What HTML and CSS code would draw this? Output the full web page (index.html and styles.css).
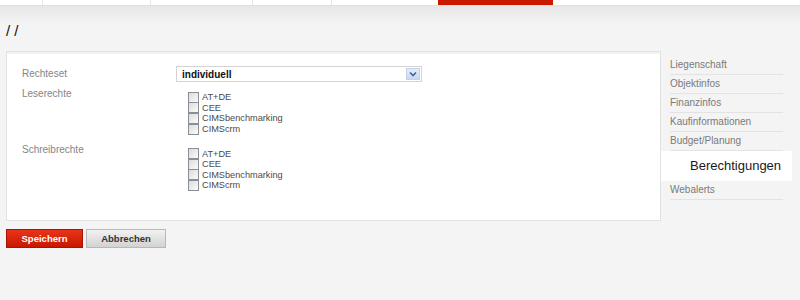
FILE: index.html
```html
<!DOCTYPE html>
<html lang="de">
<head>
    <meta charset="UTF-8">
    <meta name="viewport" content="width=device-width, initial-scale=1.0">
    <title>Berechtigungen</title>
    <link rel="stylesheet" href="styles.css">
</head>
<body>

    <!-- Top navigation (scrolled so only the bottom edge shows) -->
    <div class="topnav">
        <span class="tab tab-first"></span>
        <span class="tab tab-w108"></span>
        <span class="tab tab-w102"></span>
        <span class="tab tab-w79"></span>
        <span class="tab tab-w107"></span>
        <span class="tab tab-active"></span>
        <span class="tab tab-rest"></span>
    </div>

    <div class="page">
        <h1 class="crumbs">/ /</h1>

        <div class="content">
            <div class="panel">
                <div class="form-row">
                    <label class="form-label form-label-mid">Rechteset</label>
                    <div class="select-wrap">
                        <select class="select">
                            <option>individuell</option>
                        </select>
                        <span class="select-arrow">
                            <svg width="8" height="6" viewBox="0 0 8 6">
                                <path d="M1 1.5 L4 4.5 L7 1.5" fill="none" stroke="#3f66a8" stroke-width="1.6"/>
                            </svg>
                        </span>
                    </div>
                </div>

                <div class="form-row row-read">
                    <label class="form-label">Leserechte</label>
                    <div class="check-list">
                        <label class="check"><input type="checkbox"> AT+DE</label>
                        <label class="check"><input type="checkbox"> CEE</label>
                        <label class="check"><input type="checkbox"> CIMSbenchmarking</label>
                        <label class="check"><input type="checkbox"> CIMScrm</label>
                    </div>
                </div>

                <div class="form-row row-write">
                    <label class="form-label">Schreibrechte</label>
                    <div class="check-list">
                        <label class="check"><input type="checkbox"> AT+DE</label>
                        <label class="check"><input type="checkbox"> CEE</label>
                        <label class="check"><input type="checkbox"> CIMSbenchmarking</label>
                        <label class="check"><input type="checkbox"> CIMScrm</label>
                    </div>
                </div>
            </div>

            <ul class="sidenav">
                <li><a href="#">Liegenschaft</a></li>
                <li><a href="#">Objektinfos</a></li>
                <li><a href="#">Finanzinfos</a></li>
                <li><a href="#">Kaufinformationen</a></li>
                <li><a href="#">Budget/Planung</a></li>
                <li class="active"><a href="#">Berechtigungen</a></li>
                <li><a href="#">Webalerts</a></li>
            </ul>
        </div>

        <div class="buttons">
            <button class="btn btn-save">Speichern</button>
            <button class="btn btn-cancel">Abbrechen</button>
        </div>
    </div>

</body>
</html>
```

FILE: styles.css
```css
/* General Page Styling */
body {
    font-family: 'Liberation Sans', Arial, sans-serif;
    background-color: #f4f4f4;
    margin: 0;
    color: #333;
}

/* Top Navigation */
.topnav {
    display: flex;
    height: 5px;
    background-color: #fff;
    border-bottom: 1px solid #e0e0e0;
}

.tab {
    border-left: 1px solid #e6e6e6;
}

.tab-first {
    width: 42px;
    border-left: none;
}

.tab-w108 { width: 107px; }
.tab-w102 { width: 101px; }
.tab-w79 { width: 78px; }
.tab-w107 { width: 106px; }

.tab-active {
    width: 115px;
    border-left: none;
    background-color: #c91a00;
}

.tab-rest {
    flex: 1;
    border-left: none;
}

/* Page */
.page {
    background: linear-gradient(#e6e6e6, #f4f4f4 18px);
    padding: 16px 8px 0 6px;
}

.crumbs {
    margin: 0 0 11px 0;
    font-size: 15px;
    line-height: 18px;
    font-weight: normal;
    color: #111;
}

.content {
    display: flex;
    align-items: flex-start;
}

/* Form Panel */
.panel {
    width: 623px;
    background-color: #fff;
    border: 1px solid #e2e2e2;
    box-shadow: inset 0 2px 0 #f2f2f2;
    padding: 14px 15px 29px 15px;
}

.form-row {
    display: flex;
    align-items: flex-start;
}

.row-read {
    margin-top: 6px;
}

.row-write {
    margin-top: 10px;
}

.form-label {
    width: 154px;
    font-size: 10px;
    line-height: 12px;
    color: #858585;
}

.form-label-mid {
    align-self: center;
}

.select-wrap {
    position: relative;
    width: 246px;
}

.select {
    appearance: none;
    -webkit-appearance: none;
    display: block;
    width: 100%;
    height: 16px;
    margin: 0;
    padding: 0 0 0 5px;
    border: 1px solid #d4d4d4;
    border-radius: 0;
    background-color: #fff;
    font-family: 'Liberation Sans', Arial, sans-serif;
    font-size: 10px;
    font-weight: bold;
    color: #111;
}

.select-arrow {
    position: absolute;
    top: 2px;
    right: 2px;
    width: 14px;
    height: 12px;
    display: flex;
    align-items: center;
    justify-content: center;
    background: linear-gradient(#e4ecf8, #c9d8ef);
    border: 1px solid #c4d1e6;
    box-sizing: border-box;
}

/* Checkboxes */
.check-list {
    padding: 4px 0 0 12px;
}

.check {
    display: flex;
    align-items: center;
    height: 10.6px;
    font-size: 9.2px;
    color: #4a4a4a;
}

.check input {
    appearance: none;
    -webkit-appearance: none;
    width: 11px;
    height: 11px;
    margin: 0 3px 0 0;
    border: 1px solid #8a8f96;
    background: linear-gradient(135deg, #dcdcdc, #fbfbfb);
    box-sizing: border-box;
}

/* Side Navigation */
.sidenav {
    list-style: none;
    width: 131px;
    margin: 5px 0 0 0;
    padding: 0;
}

.sidenav li {
    margin: 0 9px;
    border-bottom: 1px solid #e3e3e3;
}

.sidenav a {
    display: block;
    font-size: 10px;
    line-height: 18px;
    color: #7a7a7a;
    text-decoration: none;
}

.sidenav li.active {
    margin: 0;
    border-bottom: none;
    background-color: #fff;
}

.sidenav li.active a {
    padding-left: 29px;
    font-size: 13px;
    line-height: 30px;
    color: #1a1a1a;
}

/* Buttons */
.buttons {
    display: flex;
    gap: 3px;
    margin-top: 8px;
}

.btn {
    height: 19px;
    padding: 0;
    font-family: 'Liberation Sans', Arial, sans-serif;
    font-size: 9.5px;
    font-weight: bold;
    cursor: pointer;
}

.btn-save {
    width: 77px;
    color: #fff;
    background: linear-gradient(#e8341a, #c81800);
    border: 1px solid #a81400;
}

.btn-cancel {
    width: 80px;
    color: #333;
    background: linear-gradient(#f2f2f2, #d2d2d2);
    border: 1px solid #b8b8b8;
}
```
